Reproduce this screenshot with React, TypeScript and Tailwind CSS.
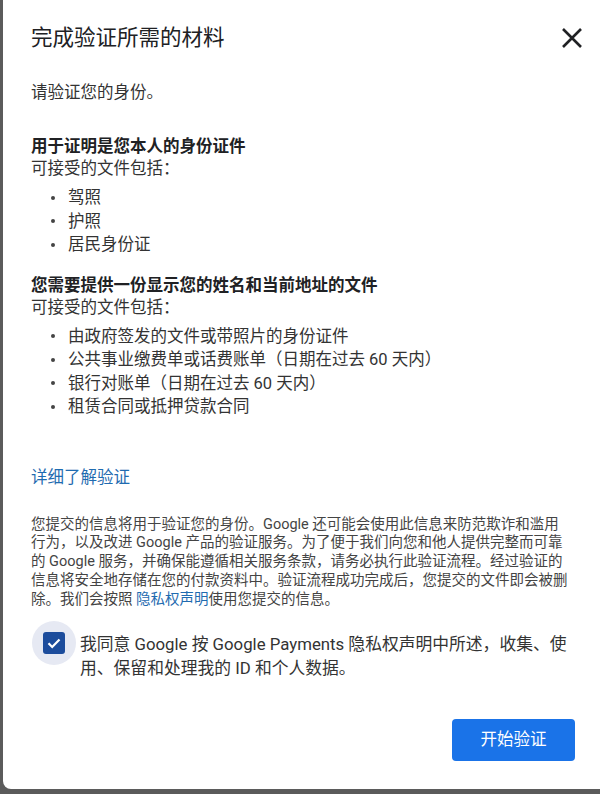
import React from "react";

const font = { fontFamily: 'Roboto, "Noto Sans CJK SC", "Noto Sans", sans-serif' };

function Bullet({ children }: { children: React.ReactNode }) {
  return (
    <li className="flex items-center leading-[23.5px]">
      <span className="ml-[20px] h-[4px] w-[4px] shrink-0 rounded-full bg-[#444]" />
      <span className="ml-[13px]">{children}</span>
    </li>
  );
}

export default function App() {
  return (
    <div className="w-[600px] h-[794px] bg-[#5b5b5b] pl-[3px]" style={font}>
      <div className="h-[789px] bg-white rounded-bl-[8px] pt-[24px] pl-[28px] pr-[25px] flex flex-col text-[#333]">
        <div className="flex items-center justify-between h-[28px]">
          <h1 className="text-[21.5px] leading-[28px] text-[#202124] font-normal">完成验证所需的材料</h1>
          <button className="mr-[-7px] flex items-center justify-center" aria-label="关闭">
            <svg width="20" height="20" viewBox="0 0 20 20">
              <path d="M1 1 L19 19 M19 1 L1 19" stroke="#202124" strokeWidth="2.6" strokeLinecap="butt" />
            </svg>
          </button>
        </div>

        <p className="mt-[29px] text-[16.5px] leading-[23px]">请验证您的身份。</p>

        <h2 className="mt-[32px] text-[16.5px] leading-[21px] font-bold text-[#202124]">用于证明是您本人的身份证件</h2>
        <p className="text-[16.5px] leading-[23px]">可接受的文件包括：</p>
        <ul className="mt-[6px] text-[16.5px]">
          <Bullet>驾照</Bullet>
          <Bullet>护照</Bullet>
          <Bullet>居民身份证</Bullet>
        </ul>

        <h2 className="mt-[18px] text-[16.5px] leading-[21px] font-bold text-[#202124]">您需要提供一份显示您的姓名和当前地址的文件</h2>
        <p className="text-[16.5px] leading-[23px]">可接受的文件包括：</p>
        <ul className="mt-[6px] text-[16.5px]">
          <Bullet>由政府签发的文件或带照片的身份证件</Bullet>
          <Bullet>公共事业缴费单或话费账单（日期在过去 60 天内）</Bullet>
          <Bullet>银行对账单（日期在过去 60 天内）</Bullet>
          <Bullet>租赁合同或抵押贷款合同</Bullet>
        </ul>

        <a className="mt-[47px] text-[16.5px] leading-[23px] text-[#1f6bb0] self-start">详细了解验证</a>

        <p className="mt-[27px] text-[14.5px] leading-[18.8px] text-[#444] whitespace-nowrap">
          您提交的信息将用于验证您的身份。Google 还可能会使用此信息来防范欺诈和滥用
          <br />
          行为，以及改进 Google 产品的验证服务。为了便于我们向您和他人提供完整而可靠
          <br />
          的 Google 服务，并确保能遵循相关服务条款，请务必执行此验证流程。经过验证的
          <br />
          信息将安全地存储在您的付款资料中。验证流程成功完成后，您提交的文件即会被删
          <br />
          除。我们会按照 <a className="text-[#1f6bb0]">隐私权声明</a>使用您提交的信息。
        </p>

        <div className="mt-[12px] flex items-start">
          <div className="ml-[1px] h-[44px] w-[44px] shrink-0 rounded-full bg-[#e6e9f3] flex items-center justify-center">
            <div className="h-[22px] w-[22px] rounded-[3px] bg-[#1c4c9c] flex items-center justify-center">
              <svg width="16" height="16" viewBox="0 0 16 16">
                <path d="M2.5 8.3 L6.2 12 L13.5 4.5" fill="none" stroke="#fff" strokeWidth="2.2" />
              </svg>
            </div>
          </div>
          <p className="ml-[4px] pt-[11px] text-[16.8px] leading-[24px] text-[#333] whitespace-nowrap">
            我同意 Google 按 Google Payments 隐私权声明中所述，收集、使
            <br />
            用、保留和处理我的 ID 和个人数据。
          </p>
        </div>

        <button className="mt-[39px] self-end h-[42px] w-[123px] rounded-[4px] bg-[#1a73e8] text-white text-[16.5px]">
          开始验证
        </button>
      </div>
    </div>
  );
}
